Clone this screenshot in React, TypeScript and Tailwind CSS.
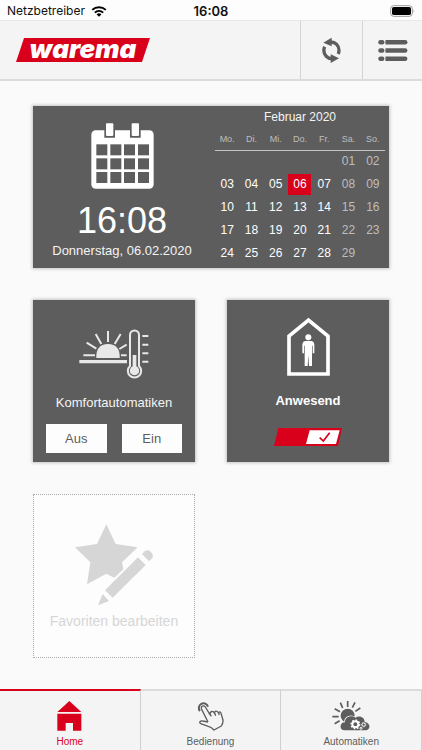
import { useState, type ReactNode } from "react";

const sans = "font-['Liberation_Sans',Arial,sans-serif]";

function StatusBar() {
  return (
    <div className="grid h-5 grid-cols-3 items-center bg-[#fdfdfd] px-[7px] pt-px font-[Inter,sans-serif] text-[12px] leading-5 text-[#111]">
      <div className="flex items-center gap-[6px]">
        <span>Netzbetreiber</span>
        <svg viewBox="272 14 48 34" className="h-[11px] w-4" fill="none" stroke="#000" strokeWidth="6" aria-hidden="true">
          <path d="M275 26 A32 32 0 0 1 317 26" />
          <path d="M283 34.500 A20 20 0 0 1 309 34.500" />
          <path d="M296 47 L288.500 40 A11 11 0 0 1 303.500 40 Z" fill="#000" stroke="none" />
        </svg>
      </div>
      <span className="text-center text-[13px] font-semibold">16:08</span>
      <svg viewBox="540 13 75 36" className="h-3 w-[25px] justify-self-end" aria-hidden="true">
        <rect x="542" y="15" width="65" height="32" rx="9" fill="none" stroke="#999" strokeWidth="3" />
        <rect x="546" y="19" width="57" height="24" rx="5" fill="#000" />
        <path d="M611 26 Q615 31 611 36 Z" fill="#888" />
      </svg>
    </div>
  );
}

function Header() {
  return (
    <header className="flex h-[61px] border-t border-b-2 border-t-[#e8e8e8] border-b-[#dcdcdc] bg-[#f4f4f4]">
      <div className="flex flex-1 items-center pl-4">
        <div className="flex h-6 w-[134px] items-center justify-center bg-[#d9001b] [clip-path:polygon(6%_0,100%_0,94%_100%,0_100%)]">
          <span className="pb-[2px] font-[Inter,sans-serif] text-[26px] leading-6 font-black text-white italic">warema</span>
        </div>
      </div>
      <button type="button" aria-label="Aktualisieren" className="flex w-[62px] items-center justify-center border-l border-[#d4d4d4]">
        <svg viewBox="331 113 57 75" className="h-[25px] w-[19px]" fill="none" stroke="#5d5d5d" strokeWidth="10">
          <path d="M357 125 C372 125 382 136 382 150 Q382 156 379.500 161" />
          <path d="M339 139 Q336.500 144 336.500 150 C336.500 164 347 175 361 175" />
          <path d="M360 112 V138 L335 127 Z" fill="#5d5d5d" stroke="none" />
          <path d="M357 162 V188 L382 174 Z" fill="#5d5d5d" stroke="none" />
        </svg>
      </button>
      <button type="button" aria-label="Menü" className="flex w-[60px] items-center justify-center border-l border-[#d4d4d4]">
        <svg viewBox="500 119 90 64" className="h-[21px] w-[30px]" fill="#5d5d5d">
          {[119, 144, 169].map((y) => (
            <g key={y}>
              <rect x="500" y={y} width="19" height="14" rx="7" />
              <path d={`M522 ${y} H582 a7 7 0 0 1 0 14 H522 Z`} />
            </g>
          ))}
        </svg>
      </button>
    </header>
  );
}

const weekdays = ["Mo.", "Di.", "Mi.", "Do.", "Fr.", "Sa.", "So."];
const weeks = [
  ["", "", "", "", "", "01", "02"],
  ["03", "04", "05", "06", "07", "08", "09"],
  ["10", "11", "12", "13", "14", "15", "16"],
  ["17", "18", "19", "20", "21", "22", "23"],
  ["24", "25", "26", "27", "28", "29", ""],
];

const cardStyle = "bg-[#5d5d5d] text-[#f4f4f4] shadow-[0_0_3px_1px_#c4c4c4]";

function CalendarIcon() {
  return (
    <svg viewBox="197 68 189 198" className="h-[66px] w-[63px]" aria-hidden="true">
      <rect x="198" y="90" width="187" height="175" rx="13" fill="#fff" />
      <path d="M237 86 H269 V112 H237 Z M314 86 H346 V112 H314 Z" fill="#5d5d5d" />
      <rect x="242" y="69" width="22" height="38" rx="3" fill="#fff" />
      <rect x="319" y="69" width="22" height="38" rx="3" fill="#fff" />
      {[132, 174, 215].map((y) =>
        [213, 255, 296, 338].map((x) => <rect key={`${x}-${y}`} x={x} y={y} width="33" height="33" fill="#5d5d5d" />),
      )}
    </svg>
  );
}

function CalendarCard() {
  return (
    <section className={`col-span-2 flex h-[162px] ${cardStyle}`}>
      <div className="flex w-1/2 flex-col items-center pt-[17px]">
        <CalendarIcon />
        <time className="mt-3 text-[36px] leading-10 text-white">16:08</time>
        <span className="text-[13px] leading-5">Donnerstag, 06.02.2020</span>
      </div>
      <div className="w-1/2 px-1">
        <table className="w-full table-fixed border-collapse text-center">
          <caption className="h-[22px] text-[12px] leading-[22px]">Februar 2020</caption>
          <thead>
            <tr className="h-[22px] border-b border-[#c4c4c4] text-[9px] leading-3 text-[#bdbdbd]">
              {weekdays.map((day) => (
                <th key={day} scope="col" className="p-0 pt-px font-normal">{day}</th>
              ))}
            </tr>
          </thead>
          <tbody>
            {weeks.map((week, row) => (
              <tr key={row} className="h-[23px] text-[12px] leading-[21px]">
                {week.map((day, col) => (
                  <td key={col} className={col > 4 ? "p-0 text-[#bdbdbd]" : "p-0 text-white"}>
                    {day === "06" ? <span className="mx-auto block h-[21px] w-[23px] bg-[#d9001b]">{day}</span> : day}
                  </td>
                ))}
              </tr>
            ))}
          </tbody>
        </table>
      </div>
    </section>
  );
}

function ComfortCard() {
  return (
    <section className={`flex h-[162px] flex-col items-center px-[13px] pt-[29px] ${cardStyle}`}>
      <svg viewBox="162 102 210 150" className="h-[50px] w-[70px]" fill="none" stroke="#e8e8e8" aria-hidden="true">
        <path d="M214 189 Q212 148 249 147 Q286 148 284 189 Z" fill="#e8e8e8" stroke="none" />
        <path d="M163 200 H306" strokeWidth="10" />
        <path d="M175 181 H210 M288 181 H305 M185 143 L214 161 M212 117 L229 147 M249 108 V141 M287 117 L269 147 M305 149 L283 162" strokeWidth="6" />
        <path d="M315 213 V120 a13 13 0 0 1 27 0 V213 a20 20 0 1 1 -27 0 Z" strokeWidth="6" />
        <path d="M323 180 H334 V214 A14 14 0 1 1 323 214 Z" fill="#e8e8e8" stroke="none" />
        <path d="M352 123 H370 M352 149 H370 M352 175 H370 M352 200 H370" strokeWidth="6" />
      </svg>
      <h2 className="mt-[14px] text-[13px] leading-5">Komfortautomatiken</h2>
      <div className="mt-[11px] flex w-full gap-[15px] text-[13px] text-[#5d5d5d]">
        <button type="button" className="h-[29px] flex-1 bg-[#fdfdfd]">Aus</button>
        <button type="button" className="h-[29px] flex-1 bg-[#fdfdfd]">Ein</button>
      </div>
    </section>
  );
}

function PresenceCard() {
  const [present, setPresent] = useState(true);
  return (
    <section className={`h-[162px] ${cardStyle}`}>
      <label className="flex cursor-pointer flex-col items-center pt-[17px]">
        <svg viewBox="200 66 129 177" className="h-[59px] w-[43px]" fill="#fff" aria-hidden="true">
          <path d="M206 237 V123 L264.500 75 L323 123 V237 Z" fill="none" stroke="#fff" strokeWidth="11" />
          <circle cx="264" cy="127" r="9" />
          <path d="M254 138 H274 Q281 139 282 148 V175 H277 V152 H275 V213 H266 L264 180 L262 213 H253 V152 H251 V175 H246 V148 Q247 139 254 138 Z" />
        </svg>
        <span className="mt-[15px] text-[13px] leading-5 font-bold text-white">Anwesend</span>
        <input type="checkbox" role="switch" className="sr-only" checked={present} onChange={(e) => setPresent(e.target.checked)} />
        <svg viewBox="164 398 204 54" className="mt-[17px] h-[18px] w-[68px]" aria-hidden="true">
          <path d="M177 398 H368 L356 452 H164 Z" fill={present ? "#d9001b" : "#9a9a9a"} />
          <path d={present ? "M271 405 H361 L350 446 H260 Z" : "M183 405 H273 L262 446 H172 Z"} fill="#fff" />
          {present && <path d="M301 427 L312 437 L331 412" fill="none" stroke="#d9001b" strokeWidth="5" />}
        </svg>
      </label>
    </section>
  );
}

function FavoritesCard() {
  return (
    <button type="button" className="flex h-[164px] flex-col items-center border border-dotted border-[#aaa] bg-[#fdfdfd] pt-[29px] text-[#d6d6d6]">
      <svg viewBox="149 102 234 246" className="h-[82px] w-[78px]" fill="currentColor" aria-hidden="true">
        <path d="M243 103 L271 162 L337 172 L290 217 L294 238 L267 263 L243 251 L185 283 L195 217 L149 172 L215 162 Z" />
        <path d="M338 202 L361 225 L262 323 L239 301 Z" />
        <path d="M232 312 L251 333 L218 346 Z" />
        <path d="M350 192 L358 184 Q367 177 376 185 Q386 194 381 204 L371 214 Z" />
      </svg>
      <span className="mt-[5px] text-[14px] leading-5">Favoriten bearbeiten</span>
    </button>
  );
}

function HomeIcon() {
  return (
    <svg viewBox="173 63 75 90" className="h-[30px] w-[25px]" fill="currentColor" aria-hidden="true">
      <path d="M210 63 L246 96 H174 Z" />
      <path d="M174 101 H246 V152 H221 V129 H199 V152 H174 Z" />
    </svg>
  );
}

function TouchIcon() {
  return (
    <svg viewBox="36 25 81 90" className="h-[30px] w-[27px]" fill="none" stroke="currentColor" aria-hidden="true">
      <path d="M45 55 A14 14 0 1 1 69 42" strokeWidth="6" />
      <path d="M69 88 L50 50 C46 41 56 36 61 43 L75 66 C75 55 84 53 89 62 C88 54 97 52 101 62 C101 55 108 57 109 65 L114 82 Q115 91 109 100 L87 112 Q80 104 70 101 L47 93 C41 89 46 83 53 85 L69 88" strokeWidth="4" strokeLinejoin="round" />
      <path d="M75 64 L79 71 M89 62 L92 69 M101 62 L103 67" strokeWidth="4" />
    </svg>
  );
}

function WeatherIcon() {
  return (
    <svg viewBox="21 25 114 90" className="h-[30px] w-[38px]" fill="currentColor" aria-hidden="true">
      <path d="M68 25 V43 M46 30 L53 46 M90 29 L82 45 M29 48 L45 57 M106 46 L91 56 M22 72 H41 M29 93 L44 84" stroke="currentColor" strokeWidth="5" />
      <circle cx="68" cy="69" r="21" />
      <path d="M59 113 C42 113 43 89 60 89 C59 73 79 66 91 75 C105 67 119 75 119 88 C138 90 137 113 122 113 Z" stroke="#f4f4f4" strokeWidth="5" paintOrder="stroke" />
      <circle cx="91" cy="95" r="9" fill="none" stroke="#fff" strokeWidth="6" />
      <circle cx="91" cy="95" r="13" fill="none" stroke="#fff" strokeWidth="4" strokeDasharray="5 5" />
      <circle cx="116" cy="96" r="5" fill="none" stroke="#fff" strokeWidth="3" />
      <circle cx="116" cy="96" r="7" fill="none" stroke="#fff" strokeWidth="2" strokeDasharray="2 3" />
      <circle cx="108" cy="107" r="3" fill="none" stroke="#fff" strokeWidth="3" />
    </svg>
  );
}

function Tab({ label, active, children }: { label: string; active?: boolean; children: ReactNode }) {
  return (
    <a
      href="#"
      aria-current={active ? "page" : undefined}
      className={`flex flex-1 flex-col items-center border-t-2 border-r border-r-[#d0d0d0] pt-[10px] ${
        active ? "border-t-[#d9001b] text-[#d9001b]" : "border-t-[#dcdcdc] text-[#5d5d5d]"
      }`}
    >
      {children}
      <span className="mt-[3px] text-[10px] leading-4">{label}</span>
    </a>
  );
}

export default function App() {
  return (
    <div className={`flex min-h-screen flex-col bg-[#fafafa] ${sans}`}>
      <StatusBar />
      <Header />
      <main className="grid flex-1 grid-cols-2 content-start gap-8 px-[33px] pt-[25px]">
        <CalendarCard />
        <ComfortCard />
        <PresenceCard />
        <FavoritesCard />
      </main>
      <nav className="flex bg-[#f4f4f4]">
        <Tab label="Home" active>
          <HomeIcon />
        </Tab>
        <Tab label="Bedienung">
          <TouchIcon />
        </Tab>
        <Tab label="Automatiken">
          <WeatherIcon />
        </Tab>
      </nav>
    </div>
  );
}
